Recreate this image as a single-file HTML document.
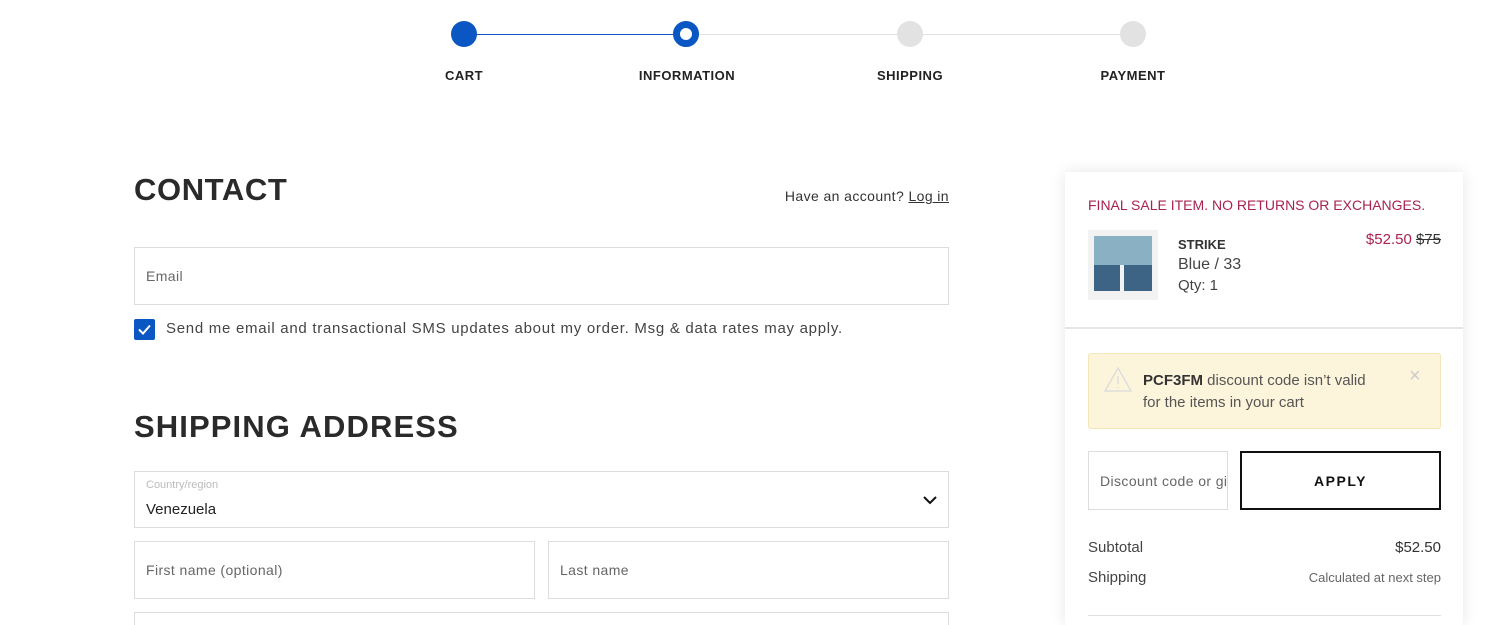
<!DOCTYPE html>
<html><head><style>
*{box-sizing:border-box;margin:0;padding:0}
html,body{width:1500px;height:625px;overflow:hidden}
body{background:#fff;font-family:"Liberation Sans",sans-serif;color:#333;position:relative}
.a{position:absolute}
.dot{position:absolute;width:26px;height:26px;border-radius:50%;top:21px}
.lbl{position:absolute;top:68px;font-size:13px;font-weight:bold;letter-spacing:.5px;color:#222;transform:translateX(-50%)}
.inp{position:absolute;border:1px solid #ddd;font-size:14px;color:#666;padding-left:11px;display:flex;align-items:center;letter-spacing:.4px}
h2{position:absolute;font-size:31px;font-weight:bold;color:#2a2a2a;letter-spacing:.6px}
</style></head><body>
<div class="a" style="left:464px;top:34px;width:222px;height:1px;background:#0a56c2"></div>
<div class="a" style="left:686px;top:34px;width:447px;height:1px;background:#e2e2e2"></div>
<div class="dot" style="left:451px;background:#0a56c2"></div>
<div class="dot" style="left:673px;background:#fff;border:7px solid #0a56c2"></div>
<div class="dot" style="left:897px;background:#e2e2e2"></div>
<div class="dot" style="left:1120px;background:#e2e2e2"></div>
<div class="lbl" style="left:464px">CART</div>
<div class="lbl" style="left:687px">INFORMATION</div>
<div class="lbl" style="left:910px">SHIPPING</div>
<div class="lbl" style="left:1133px">PAYMENT</div>

<h2 style="left:134px;top:172px">CONTACT</h2>
<div class="a" style="right:551px;top:188px;font-size:14px;color:#333;letter-spacing:.4px">Have an account? <span style="text-decoration:underline">Log in</span></div>
<div class="inp" style="left:134px;top:247px;width:815px;height:58px">Email</div>
<div class="a" style="left:134px;top:319px;width:21px;height:21px;background:#0a56c2;border-radius:2px"><svg width="21" height="21"><path d="M5 10.5l4 4 7-8" stroke="#fff" stroke-width="2" fill="none"/></svg></div>
<div class="a" style="left:166px;top:320px;font-size:15px;color:#444;letter-spacing:.72px;white-space:nowrap">Send me email and transactional SMS updates about my order. Msg &amp; data rates may apply.</div>

<h2 style="left:134px;top:409px;letter-spacing:1.1px">SHIPPING ADDRESS</h2>
<div class="inp" style="left:134px;top:471px;width:815px;height:57px;display:block">
<div style="font-size:11px;color:#bbb;margin-top:7px;letter-spacing:0">Country/region</div>
<div style="font-size:15px;color:#222;margin-top:10px;letter-spacing:0">Venezuela</div>
<svg class="a" style="right:11px;top:23px" width="14" height="10"><path d="M1 2l6 6 6-6" stroke="#111" stroke-width="2" fill="none"/></svg></div>
<div class="inp" style="left:134px;top:541px;width:401px;height:58px">First name (optional)</div>
<div class="inp" style="left:548px;top:541px;width:401px;height:58px">Last name</div>
<div class="inp" style="left:134px;top:612px;width:815px;height:13px;border-bottom:none"></div>

<div class="a" style="left:1065px;top:172px;width:398px;height:453px;background:#fff;box-shadow:0 0 14px rgba(0,0,0,.1)"></div>
<div class="a" style="left:1088px;top:197px;font-size:14px;color:#a8234f;white-space:nowrap">FINAL SALE ITEM. NO RETURNS OR EXCHANGES.</div>
<div class="a" style="left:1088px;top:230px;width:70px;height:70px;background:#f2f2f2">
<div class="a" style="left:6px;top:6px;width:58px;height:29px;background:#8ab0c4"></div>
<div class="a" style="left:6px;top:35px;width:26px;height:26px;background:#3d6485"></div>
<div class="a" style="left:36px;top:35px;width:28px;height:26px;background:#3d6485"></div></div>
<div class="a" style="left:1178px;top:237px;font-size:13px;font-weight:bold;color:#333">STRIKE</div>
<div class="a" style="left:1178px;top:256px;font-size:16px;color:#444">Blue / 33</div>
<div class="a" style="left:1178px;top:277px;font-size:15px;color:#444">Qty: 1</div>
<div class="a" style="right:59px;top:231px;font-size:15px;color:#a8234f">$52.50 <span style="color:#333;text-decoration:line-through">$75</span></div>
<div class="a" style="left:1065px;top:327px;width:398px;height:2px;background:#e6e6e6"></div>
<div class="a" style="left:1088px;top:353px;width:353px;height:76px;background:#fdf5db;border:1px solid #f3e6b8;border-radius:3px"></div>
<svg class="a" style="left:1103px;top:366px" width="30" height="27"><path d="M15 2L28 25H2Z" stroke="#ddd" stroke-width="1.5" fill="none"/><path d="M15 10v8M15 21v1" stroke="#ddd" stroke-width="1.5"/></svg>
<div class="a" style="left:1143px;top:370px;font-size:15px;line-height:22px;color:#555;width:232px"><b style="color:#333">PCF3FM</b> discount code isn’t valid for the items in your cart</div>
<div class="a" style="left:1409px;top:365px;font-size:20px;color:#ccc">×</div>
<div class="inp" style="left:1088px;top:451px;width:140px;height:59px;overflow:hidden;white-space:nowrap">Discount code or gift card</div>
<div class="a" style="left:1240px;top:451px;width:201px;height:59px;border:2px solid #111;font-size:14px;font-weight:bold;letter-spacing:1.5px;display:flex;align-items:center;justify-content:center;color:#111">APPLY</div>
<div class="a" style="left:1088px;top:539px;font-size:15px;color:#444">Subtotal</div>
<div class="a" style="right:59px;top:539px;font-size:15px;color:#333">$52.50</div>
<div class="a" style="left:1088px;top:569px;font-size:15px;color:#444">Shipping</div>
<div class="a" style="right:59px;top:570px;font-size:13px;color:#666">Calculated at next step</div>
<div class="a" style="left:1088px;top:615px;width:353px;height:1px;background:#e0e0e0"></div>
</body></html>
